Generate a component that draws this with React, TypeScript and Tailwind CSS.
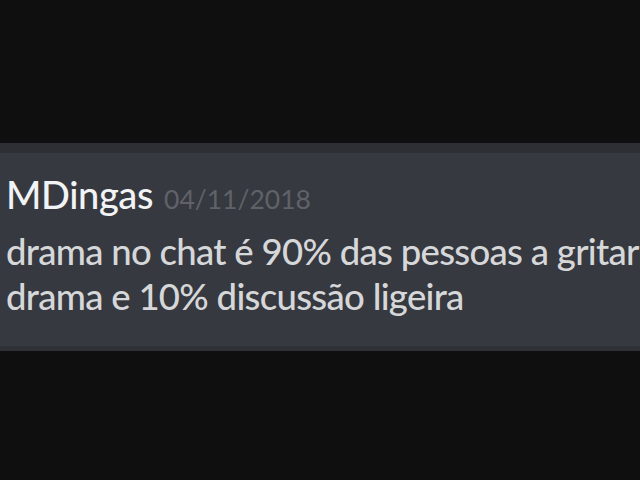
export default function App() {
  return (
    <div className="w-[640px] h-[480px] bg-[#0f0f10] flex flex-col overflow-hidden" style={{ fontFamily: '"Lato", "Noto Sans", sans-serif' }}>
      <div className="h-[143px] shrink-0" />
      <div className="h-[10px] bg-[#2d2f34] shrink-0" />
      <div className="h-[193px] bg-[#363940] shrink-0 pl-[6px] pt-[19px] whitespace-nowrap">
        <div className="flex items-baseline gap-[11px] leading-[44px]">
          <span className="text-[38px] text-[#f2f3f5] font-medium tracking-[-0.4px]">MDingas</span>
          <span className="text-[26.5px] text-[#5f6269]">04/11/2018</span>
        </div>
        <div className="mt-[8px] text-[#d6d7d9] text-[36.5px] leading-[45px] font-medium tracking-[-0.7px]">
          <div>drama no chat é 90% das pessoas a gritar</div>
          <div>drama e 10% discussão ligeira</div>
        </div>
      </div>
      <div className="h-[5px] bg-[#2f3136] shrink-0" />
    </div>
  );
}
